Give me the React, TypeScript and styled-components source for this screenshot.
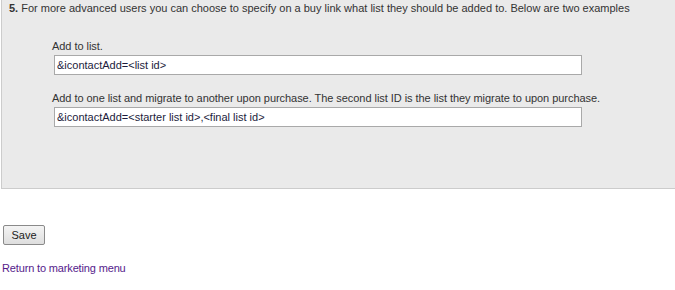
import React from 'react';
import styled, {createGlobalStyle} from 'styled-components';

const GlobalStyle = createGlobalStyle`
  html, body {
    margin: 0;
    padding: 0;
    background: #fff;
  }
  body {
    font-family: "Liberation Sans", Arial, sans-serif;
    font-size: 11px;
    color: #333;
  }
`;

const EXAMPLES = [
  {id: 1, label: 'Add to list.', value: '&icontactAdd=<list id>'},
  {
    id: 2,
    label: 'Add to one list and migrate to another upon purchase. The second list ID is the list they migrate to upon purchase.',
    value: '&icontactAdd=<starter list id>,<final list id>',
  },
];

export default function App() {
  return (
    <>
      <GlobalStyle/>
      <Panel>
        <Intro><b>5.</b> For more advanced users you can choose to specify on a buy link what list they should be added to. Below are two examples</Intro>
        <Examples>
          {EXAMPLES.map((ex) => (
            <Example key={ex.id}>
              <Label>{ex.label}</Label>
              <CodeInput readOnly value={ex.value}/>
            </Example>
          ))}
        </Examples>
      </Panel>
      <Footer>
        <SaveButton type="button">Save</SaveButton>
        <BackLink href="#">Return to marketing menu</BackLink>
      </Footer>
    </>
  );
}

const Panel = styled.div`
  margin-left: 1px;
  height: 189px;
  box-sizing: border-box;
  background: #eaeaea;
  border-left: 1px solid #ccc;
  border-bottom: 1px solid #ccc;
  padding: 1px 0 0 7px;
`;

const Intro = styled.p`
  margin: 0;
  line-height: 14px;
`;

const Examples = styled.div`
  display: flex;
  flex-direction: column;
  gap: 16px;
  padding: 24px 0 0 43px;
`;

const Example = styled.div`
  display: flex;
  flex-direction: column;
  gap: 2px;
`;

const Label = styled.div`
  line-height: 14px;
  letter-spacing: -0.05px;
`;

const CodeInput = styled.input`
  box-sizing: border-box;
  width: 528px;
  height: 20px;
  margin-left: 2px;
  padding: 0 2px;
  border: 1px solid #a9a9a9;
  background: #fff;
  font-family: "Liberation Sans", Arial, sans-serif;
  font-size: 11px;
  color: #1c1c3c;
  outline: none;
`;

const Footer = styled.div`
  display: flex;
  flex-direction: column;
  align-items: flex-start;
  gap: 16px;
  padding: 36px 0 0 2px;
`;

const SaveButton = styled.button`
  margin-left: 1px;
  width: 42px;
  height: 20px;
  padding: 0;
  border: 1px solid #8a8a8a;
  border-radius: 2px;
  background: linear-gradient(#f4f4f4, #dedede);
  font-family: "Liberation Sans", Arial, sans-serif;
  font-size: 11px;
  color: #222;
`;

const BackLink = styled.a`
  color: #551a8b;
  text-decoration: none;
  line-height: 14px;
  letter-spacing: -0.15px;
`;
